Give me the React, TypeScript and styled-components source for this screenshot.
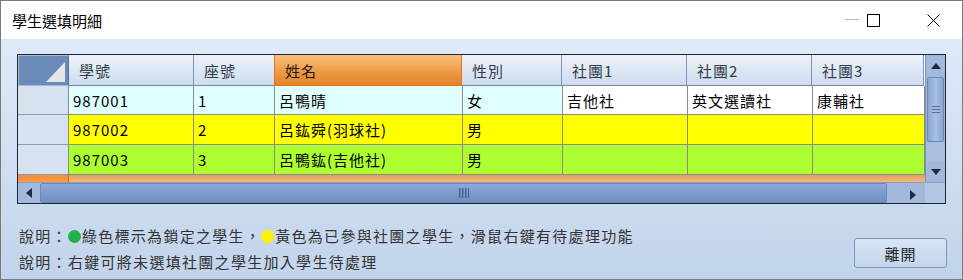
import * as React from 'react';
import styled, { createGlobalStyle } from 'styled-components';

const GlobalStyle = createGlobalStyle`
  html, body {
    margin: 0;
    padding: 0;
    background: #ffffff;
  }
  * {
    box-sizing: border-box;
  }
`;

const FONT = `'Noto Sans CJK TC', 'Noto Sans', sans-serif`;

const COLS = [51, 125, 81, 188, 100, 125, 125, 112];

const HEADERS = ['學號', '座號', '姓名', '性別', '社團1', '社團2', '社團3'];

type Row = { cells: string[]; bg: string; clubBg: string };

const ROWS: Row[] = [
  { cells: ['987001', '1', '呂鴨晴', '女', '吉他社', '英文選讀社', '康輔社'], bg: '#e0ffff', clubBg: '#ffffff' },
  { cells: ['987002', '2', '呂鈜舜(羽球社)', '男', '', '', ''], bg: '#ffff00', clubBg: '#ffff00' },
  { cells: ['987003', '3', '呂鴨鈜(吉他社)', '男', '', '', ''], bg: '#adff2f', clubBg: '#adff2f' },
];

const Window = styled.div`
  width: 963px;
  height: 280px;
  border: 1px solid #7a7a7a;
  display: flex;
  flex-direction: column;
  font-family: ${FONT};
  overflow: hidden;
`;

const TitleBar = styled.div`
  height: 38px;
  background: #ffffff;
  display: flex;
  align-items: center;
  padding-left: 11px;
`;

const Title = styled.div`
  flex: 1;
  font-size: 15px;
  color: #000;
`;

const Controls = styled.div`
  display: flex;
  align-items: center;
  height: 100%;
  padding-right: 19px;
`;

const ControlButton = styled.div<{ $w: number; $gap?: number }>`
  width: ${(p) => p.$w}px;
  height: 100%;
  display: flex;
  align-items: center;
  justify-content: center;
  margin-left: ${(p) => p.$gap ?? 0}px;
`;

const Body = styled.div`
  flex: 1;
  background: linear-gradient(#deeaf8, #c2d4eb);
  padding: 15px 15px 0 16px;
  display: flex;
  flex-direction: column;
`;

const GridFrame = styled.div`
  width: 929px;
  border: 1px solid #1e2430;
  display: flex;
  flex-direction: column;
  background: #ffffff;
`;

const GridTop = styled.div`
  display: flex;
`;

const Table = styled.div`
  width: 907px;
  display: flex;
  flex-direction: column;
`;

const Line = styled.div<{ $h: number }>`
  display: flex;
  height: ${(p) => p.$h}px;
`;

const Corner = styled.div`
  width: ${COLS[0]}px;
  height: 100%;
  background: #6a8ab8;
  border: 1px solid #a8bbd8;
  border-right-color: #5a6f92;
  display: flex;
  align-items: flex-end;
  justify-content: flex-end;
  padding: 0 3px 3px 0;
`;

const HeaderCell = styled.div<{ $w: number; $active?: boolean }>`
  width: ${(p) => p.$w}px;
  height: 100%;
  display: flex;
  align-items: center;
  padding-left: 10px;
  font-size: 15px;
  letter-spacing: 1px;
  color: ${(p) => (p.$active ? '#1a1a1a' : '#333a45')};
  background: ${(p) =>
    p.$active
      ? 'linear-gradient(#f9c07a, #ee9a45 55%, #e2842a)'
      : 'linear-gradient(#eef3fa, #dbe6f4 55%, #cddcf0)'};
  border-right: 1px solid ${(p) => (p.$active ? '#e4731c' : '#7f93b2')};
  border-bottom: 1px solid ${(p) => (p.$active ? '#e4731c' : '#6f86aa')};
  border-left: ${(p) => (p.$active ? '1px solid #e4731c' : 'none')};
  margin-left: ${(p) => (p.$active ? '-1px' : '0')};
`;

const RowHead = styled.div`
  width: ${COLS[0]}px;
  height: 100%;
  background: #d7e2f1;
  border-right: 1px solid #8a8a8a;
  border-bottom: 1px solid #8f9aab;
`;

const Cell = styled.div<{ $w: number; $bg: string }>`
  width: ${(p) => p.$w}px;
  height: 100%;
  display: flex;
  align-items: center;
  padding-left: 4px;
  font-size: 15px;
  letter-spacing: 1px;
  color: #000;
  background: ${(p) => p.$bg};
  border-right: 1px solid #8a8a8a;
  border-bottom: 1px solid #8a8a8a;
  white-space: nowrap;
  overflow: hidden;
`;

const NewRowBar = styled.div`
  display: flex;
  height: 7px;
`;

const NewRowHead = styled.div`
  width: ${COLS[0]}px;
  background: linear-gradient(#f58a35, #f89e4c);
  border-right: 1px solid #d46a1c;
`;

const NewRowRest = styled.div`
  flex: 1;
  background: linear-gradient(#e4a15d, #f0b87e);
`;

const VScroll = styled.div`
  width: 20px;
  display: flex;
  flex-direction: column;
  background: #a3b9db;
  border-left: 1px solid #7c92b8;
`;

const ArrowBox = styled.div<{ $h: number; $w?: number }>`
  height: ${(p) => p.$h}px;
  width: ${(p) => (p.$w ? `${p.$w}px` : 'auto')};
  display: flex;
  align-items: center;
  justify-content: center;
  flex-shrink: 0;
`;

const VThumb = styled.div`
  height: 65px;
  margin: 1px 1px 0 1px;
  border: 1px solid #6f88b3;
  border-radius: 2px;
  background: linear-gradient(90deg, #8aa6d1, #a9c0e2 50%, #8aa6d1);
  display: flex;
  align-items: center;
  justify-content: center;
`;

const VTrack = styled.div`
  flex: 1;
  background: #aabfde;
`;

const HScroll = styled.div`
  height: 21px;
  display: flex;
  background: #a3b9db;
  border-top: 1px solid #8aa0c4;
`;

const HThumb = styled.div`
  width: 847px;
  height: 100%;
  border: 1px solid #6f88b3;
  border-radius: 2px;
  background: linear-gradient(#8eaad5, #7c9bcc 50%, #6f8ec2);
  display: flex;
  align-items: center;
  justify-content: center;
`;

const ScrollCorner = styled.div`
  width: 20px;
  height: 100%;
  background: #b3c7e3;
`;

const Footer = styled.div`
  display: flex;
  align-items: flex-start;
  justify-content: space-between;
  padding-top: 19px;
`;

const Notes = styled.div`
  display: flex;
  flex-direction: column;
  padding-left: 2px;
`;

const Note = styled.div`
  font-size: 15px;
  letter-spacing: 1.3px;
  line-height: 26px;
  color: #333;
  display: flex;
  align-items: center;
  white-space: nowrap;
`;

const Dot = styled.span<{ $color: string }>`
  display: inline-block;
  width: 13px;
  height: 13px;
  border-radius: 50%;
  background: ${(p) => p.$color};
  margin: 0 1px 0 0;
`;

const CloseButton = styled.button`
  margin-top: 15px;
  width: 93px;
  height: 30px;
  border: 1px solid #7d95ba;
  border-radius: 3px;
  background: linear-gradient(#d8e5f5, #c3d5ec);
  font-family: ${FONT};
  font-size: 15px;
  letter-spacing: 1px;
  color: #222;
  padding: 0;
`;

const Grip = ({ vertical }: { vertical?: boolean }) =>
  vertical ? (
    <svg width="10" height="8" viewBox="0 0 10 8">
      {[0, 3, 6].map((y) => (
        <rect key={y} x="1" y={y} width="8" height="1" fill="#5a6f92" />
      ))}
    </svg>
  ) : (
    <svg width="10" height="10" viewBox="0 0 10 10">
      {[0, 3, 6, 9].map((x) => (
        <rect key={x} x={x} y="0" width="1.4" height="10" fill="#4d5f80" />
      ))}
    </svg>
  );

const Tri = ({ dir }: { dir: 'up' | 'down' | 'left' | 'right' }) => {
  const pts = {
    up: '0,6 5,0 10,6',
    down: '0,0 10,0 5,6',
    left: '6,0 6,10 0,5',
    right: '0,0 0,10 6,5',
  }[dir];
  const vert = dir === 'up' || dir === 'down';
  return (
    <svg width={vert ? 10 : 6} height={vert ? 6 : 10} viewBox={vert ? '0 0 10 6' : '0 0 6 10'}>
      <polygon points={pts} fill="#1e2a44" />
    </svg>
  );
};

export default function App() {
  return (
    <>
      <GlobalStyle />
      <Window>
        <TitleBar>
          <Title>學生選填明細</Title>
          <Controls>
            <ControlButton $w={20}>
              <svg width="14" height="2" viewBox="0 0 14 2">
                <rect x="0" y="0" width="14" height="1" fill="#b8b8b8" />
              </svg>
            </ControlButton>
            <ControlButton $w={20} $gap={1}>
              <svg width="13" height="13" viewBox="0 0 13 13">
                <rect x="0.5" y="0.5" width="12" height="12" fill="none" stroke="#000" strokeWidth="1" />
              </svg>
            </ControlButton>
            <ControlButton $w={20} $gap={40}>
              <svg width="13" height="13" viewBox="0 0 13 13">
                <path d="M0.5 0.5 L12.5 12.5 M12.5 0.5 L0.5 12.5" stroke="#000" strokeWidth="1" />
              </svg>
            </ControlButton>
          </Controls>
        </TitleBar>
        <Body>
          <GridFrame>
            <GridTop>
              <Table>
                <Line $h={31}>
                  <Corner>
                    <svg width="19" height="20" viewBox="0 0 19 20">
                      <polygon points="19,0 19,20 0,20" fill="#e6e6e6" />
                    </svg>
                  </Corner>
                  {HEADERS.map((h, i) => (
                    <HeaderCell key={h} $w={COLS[i + 1]} $active={h === '姓名'}>
                      {h}
                    </HeaderCell>
                  ))}
                </Line>
                {ROWS.map((r) => (
                  <Line $h={r.cells[1] === '1' ? 29 : 30} key={r.cells[0]}>
                    <RowHead />
                    {r.cells.map((c, i) => (
                      <Cell key={i} $w={COLS[i + 1]} $bg={i >= 4 ? r.clubBg : r.bg}>
                        {c}
                      </Cell>
                    ))}
                  </Line>
                ))}
                <NewRowBar>
                  <NewRowHead />
                  <NewRowRest />
                </NewRowBar>
              </Table>
              <VScroll>
                <ArrowBox $h={21}>
                  <Tri dir="up" />
                </ArrowBox>
                <VThumb>
                  <Grip vertical />
                </VThumb>
                <VTrack />
                <ArrowBox $h={20}>
                  <Tri dir="down" />
                </ArrowBox>
              </VScroll>
            </GridTop>
            <HScroll>
              <ArrowBox $h={20} $w={22}>
                <Tri dir="left" />
              </ArrowBox>
              <HThumb>
                <Grip />
              </HThumb>
              <ArrowBox $h={20} $w={38}>
                <div style={{ marginLeft: 14 }}>
                  <Tri dir="right" />
                </div>
              </ArrowBox>
              <ScrollCorner />
            </HScroll>
          </GridFrame>
          <Footer>
            <Notes>
              <Note>
                說明：<Dot $color="#22b14c" />綠色標示為鎖定之學生，<Dot $color="#fff200" />黃色為已參與社團之學生，滑鼠右鍵有待處理功能
              </Note>
              <Note>說明：右鍵可將未選填社團之學生加入學生待處理</Note>
            </Notes>
            <CloseButton>離開</CloseButton>
          </Footer>
        </Body>
      </Window>
    </>
  );
}
